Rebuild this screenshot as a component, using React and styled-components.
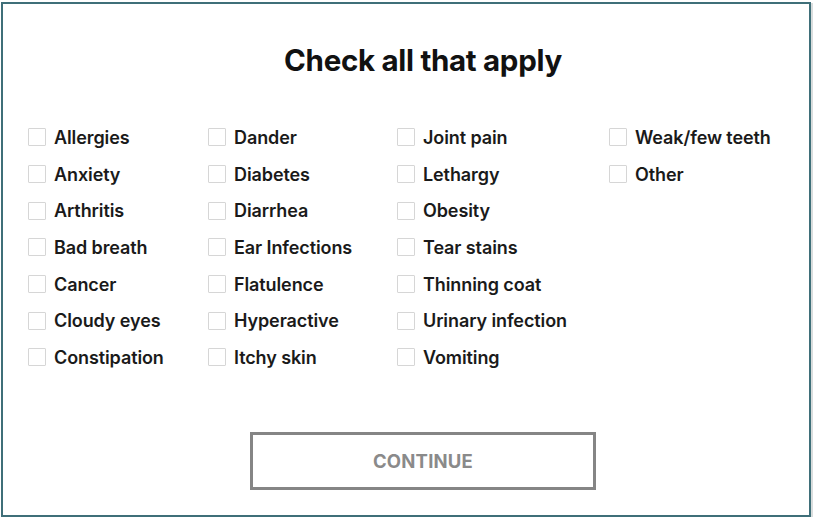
import React from "react";
import styled, { createGlobalStyle } from "styled-components";

const Global = createGlobalStyle`
  html, body { margin: 0; padding: 0; background: #fff; }
  body { font-family: Inter, "Liberation Sans", Arial, sans-serif; }
`;

const Frame = styled.div`
  box-sizing: border-box;
  margin: 2px 0 0 1px;
  width: 810px;
  height: 515px;
  border: 2px solid #3f6f79;
  box-shadow: 2px 1px 0 #d9dddd;
  background: #fff;
  display: flex;
  flex-direction: column;
  align-items: center;
`;

const Title = styled.h1`
  margin: 37px 0 0 34px;
  font-size: 29.5px;
  line-height: 38px;
  font-weight: 700;
  letter-spacing: -0.3px;
  color: #111;
  text-align: center;
`;

const Grid = styled.div`
  align-self: stretch;
  margin: 40px 0 0 25px;
  display: grid;
  grid-template-columns: 180px 189px 212px 1fr;
  grid-auto-flow: column;
  grid-template-rows: repeat(7, 36.7px);
`;

const Option = styled.label`
  display: flex;
  align-items: center;
  gap: 8px;
  font-size: 18px;
  font-weight: 600;
  color: #1a1a1a;
  letter-spacing: -0.1px;
  cursor: pointer;
`;

const Box = styled.span`
  box-sizing: border-box;
  width: 18px;
  height: 18px;
  border: 1px solid #d6d6d6;
  border-radius: 1px;
  background: #fff;
  flex: none;
`;

const Button = styled.button`
  box-sizing: border-box;
  margin: 56px 0 0 34px;
  width: 346px;
  height: 58px;
  border: 3px solid #858585;
  background: #fff;
  color: #8a8a8a;
  font-family: Inter, "Liberation Sans", Arial, sans-serif;
  font-size: 18.5px;
  font-weight: 700;
  letter-spacing: 0.2px;
`;

const columns = [
  ["Allergies", "Anxiety", "Arthritis", "Bad breath", "Cancer", "Cloudy eyes", "Constipation"],
  ["Dander", "Diabetes", "Diarrhea", "Ear Infections", "Flatulence", "Hyperactive", "Itchy skin"],
  ["Joint pain", "Lethargy", "Obesity", "Tear stains", "Thinning coat", "Urinary infection", "Vomiting"],
  ["Weak/few teeth", "Other"],
];

export default function App() {
  return (
    <>
      <Global />
      <Frame>
        <Title>Check all that apply</Title>
        <Grid>
          {columns.map((col, ci) =>
            col.map((name, ri) => (
              <Option key={name} style={{ gridColumn: ci + 1, gridRow: ri + 1 }}>
                <Box />
                {name}
              </Option>
            ))
          )}
        </Grid>
        <Button>CONTINUE</Button>
      </Frame>
    </>
  );
}
